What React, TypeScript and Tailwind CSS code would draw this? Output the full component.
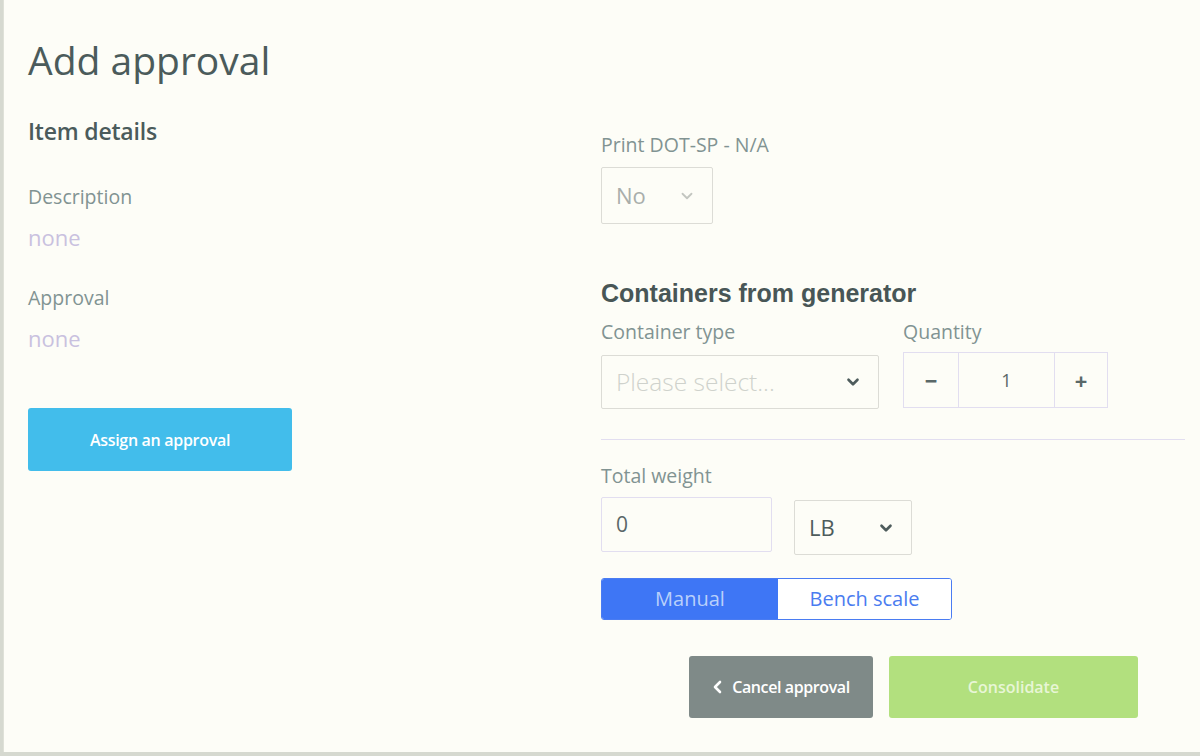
import React from "react";

const sans = { fontFamily: "'Open Sans', Lato, sans-serif" };

function Chevron({ className, strokeWidth = 2 }: { className?: string; strokeWidth?: number }) {
    return (
        <svg className={className} viewBox="0 0 24 24" fill="none" stroke="currentColor" strokeWidth={strokeWidth} strokeLinecap="round" strokeLinejoin="round">
            <path d="M6 9l6 6 6-6" />
        </svg>
    );
}

function Label({ children, className = "" }: { children: React.ReactNode; className?: string }) {
    return <div className={`text-[19.5px] leading-6 text-[#819392] ${className}`}>{children}</div>;
}

function Field({ label, value }: { label: string; value: string }) {
    return (
        <div>
            <Label>{label}</Label>
            <div className="mt-[14px] text-[22px] leading-7 text-[#c9c1df]">{value}</div>
        </div>
    );
}

export default function App() {
    return (
        <div className="w-full h-[756px] bg-[#d6d9d0] overflow-hidden" style={sans}>
            <div className="h-[752px] ml-[3px] border-l border-[#dfe1d8] bg-[#fdfdf7] flex flex-col">
                <h1 className="pl-[24px] pt-[36px] text-[39px] leading-[48px] text-[#4b5b5b]">Add approval</h1>

                <div className="flex">
                    {/* left: item details */}
                    <div className="w-[597px] pl-[24px] pt-[33px]">
                        <h2 className="text-[23px] leading-7 font-semibold text-[#4b5b5b] tracking-[-0.2px]">Item details</h2>
                        <div className="mt-[40px] flex flex-col gap-[35px]">
                            <Field label="Description" value="none" />
                            <Field label="Approval" value="none" />
                        </div>
                        <button className="mt-[56px] w-[264px] h-[63px] rounded-[3px] bg-[#42bdeb] text-white text-[16px] font-semibold tracking-[-0.3px]">
                            Assign an approval
                        </button>
                    </div>

                    {/* right: containers + weight */}
                    <div className="flex-1 pr-[15px] pt-[49px]">
                        <Label>Print DOT-SP - N/A</Label>
                        <div className="mt-[10px] w-[112px] h-[57px] border border-[#dcdcd6] rounded-[2px] flex items-center justify-between pl-[14px] pr-[16px]">
                            <span className="text-[22px] text-[#a9aeab]">No</span>
                            <Chevron className="w-[18px] h-[18px] text-[#c3c6c0]" strokeWidth={2.4} />
                        </div>

                        <h3 className="mt-[55px] text-[25px] leading-7 font-bold text-[#485656]" style={{ fontFamily: "'Liberation Sans', Arial, sans-serif" }}>
                            Containers from generator
                        </h3>

                        <div className="mt-[13px] flex gap-[24px]">
                            <div>
                                <Label>Container type</Label>
                                <div className="mt-[11px] w-[278px] h-[54px] border border-[#dcdcd6] rounded-[2px] flex items-center justify-between pl-[14px] pr-[16px]">
                                    <span className="text-[24.5px] font-light text-[#cfd2cc]">Please select...</span>
                                    <Chevron className="w-[18px] h-[18px] text-[#4e5c5c]" strokeWidth={3.5} />
                                </div>
                            </div>
                            <div>
                                <Label>Quantity</Label>
                                <div className="mt-[8px] w-[205px] h-[56px] border border-[#e2def0] flex text-[#5a6868]">
                                    <div className="w-[55px] flex items-center justify-center border-r border-[#e2def0] text-[22px] font-bold">−</div>
                                    <div className="w-[96px] flex items-center justify-center border-r border-[#e2def0] text-[18px]">1</div>
                                    <div className="flex-1 flex items-center justify-center text-[22px] font-bold">+</div>
                                </div>
                            </div>
                        </div>

                        <div className="mt-[30px] border-t border-[#e2def0]" />

                        <Label className="mt-[24px]">Total weight</Label>
                        <div className="mt-[9px] flex items-start gap-[22px]">
                            <div className="w-[171px] h-[55px] border border-[#e2def0] rounded-[2px] flex items-center pl-[14px] text-[21px] text-[#5a6868]">0</div>
                            <div className="mt-[3px] w-[118px] h-[55px] border border-[#dcdcd6] rounded-[2px] flex items-center justify-between pl-[14px] pr-[16px]">
                                <span className="text-[22px] text-[#4e5c5c]">LB</span>
                                <Chevron className="w-[18px] h-[18px] text-[#4e5c5c]" strokeWidth={3.5} />
                            </div>
                        </div>

                        <div className="mt-[23px] w-[351px] h-[42px] flex border border-[#4a7cf2] rounded-[3px] overflow-hidden text-[20px]">
                            <div className="w-[176px] bg-[#3e76f5] text-[#b9d0fb] flex items-center justify-center">Manual</div>
                            <div className="flex-1 bg-white text-[#4a7cf0] flex items-center justify-center">Bench scale</div>
                        </div>

                        <div className="mt-[36px] ml-[88px] flex gap-[16px]">
                            <button className="w-[184px] h-[62px] rounded-[3px] bg-[#7f8a88] text-white text-[16px] font-semibold tracking-[-0.4px] flex items-center justify-center gap-[8px]">
                                <svg className="w-[12px] h-[14px]" viewBox="0 0 12 14" fill="none" stroke="currentColor" strokeWidth={2.6} strokeLinecap="round" strokeLinejoin="round">
                                    <path d="M8 2L3 7l5 5" />
                                </svg>
                                Cancel approval
                            </button>
                            <button className="w-[249px] h-[62px] rounded-[3px] bg-[#b2e07e] text-[#e8f6d6] text-[16px] font-semibold">
                                Consolidate
                            </button>
                        </div>
                    </div>
                </div>
            </div>
        </div>
    );
}
